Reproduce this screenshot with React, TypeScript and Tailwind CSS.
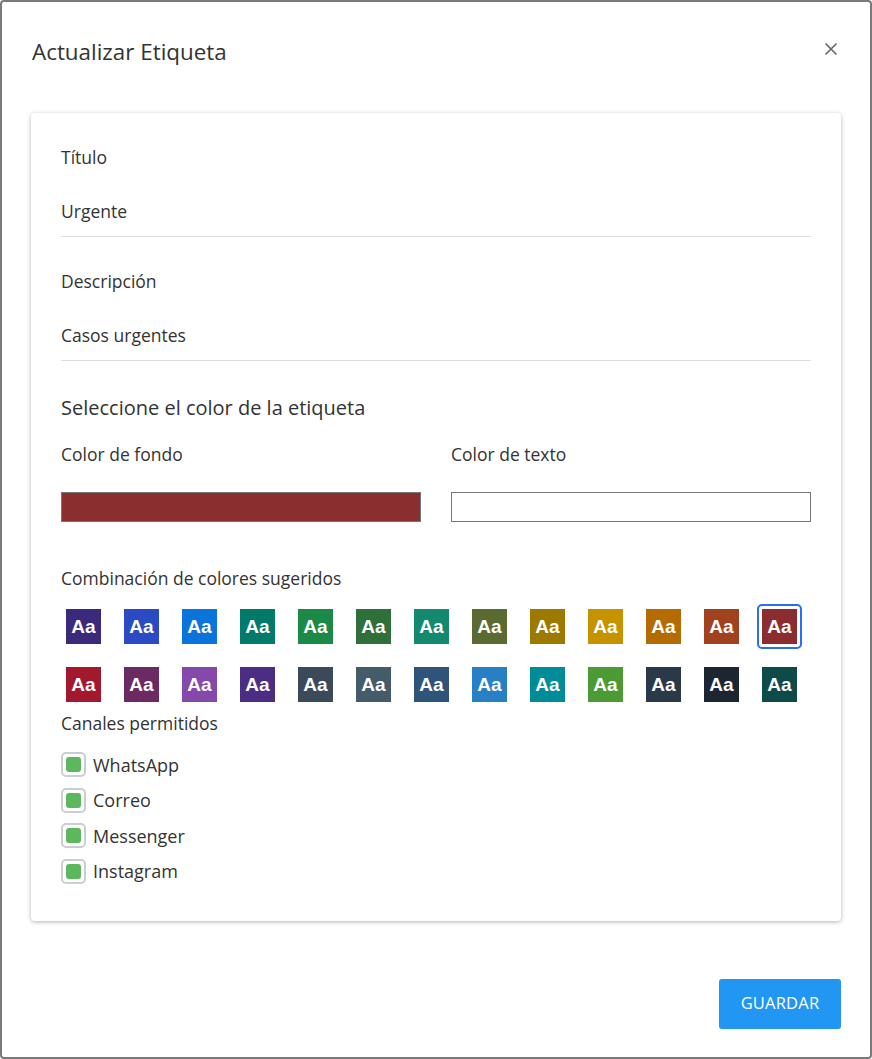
import { useState } from "react";

const SWATCHES = [
  "#3b2a7c", "#2b4bc4", "#0a74da", "#01796b", "#1b8a47", "#2f6f3a", "#138a70",
  "#5a6a30", "#9c7a00", "#c59200", "#b46c00", "#a0421e", "#8b2c2f",
  "#a2182d", "#6c2a63", "#8549ab", "#4b2e84", "#3a4a5b", "#445b6a", "#2f5479",
  "#2680c3", "#008b99", "#4c9a33", "#2a3948", "#1c2631", "#0e4b48",
];

const CHANNELS = ["WhatsApp", "Correo", "Messenger", "Instagram"];

const Field = ({ label, value }: { label: string; value: string }) => (
  <div className="border-b border-[#dcdcdc] pb-[13px]">
    <div className="leading-[24px] text-[17.5px] text-[#333]">{label}</div>
    <div className="mt-[30px] leading-[24px] text-[17.5px] text-[#333]">{value}</div>
  </div>
);

const App = () => {
  const [selected, setSelected] = useState(12);

  return (
    <div
      className="w-[872px] h-[1059px] bg-white border-2 border-[#7a7a7a] rounded-[4px] flex flex-col px-[29px] text-[#333]"
      style={{ fontFamily: '"Open Sans", "Noto Sans", sans-serif' }}
    >
      <div className="flex items-center justify-between pt-[35px]">
        <h1 className="text-[22.4px] leading-[30px] pl-[1px] text-[#333]">Actualizar Etiqueta</h1>
        <button type="button" className="mr-[3px] -mt-[6px] text-[#666]" aria-label="Cerrar">
          <svg width="14" height="14" viewBox="0 0 14 14">
            <path d="M1.5 1.5 L12.5 12.5 M12.5 1.5 L1.5 12.5" stroke="#666" strokeWidth="1.6" />
          </svg>
        </button>
      </div>

      <div className="mt-[46px] rounded-[4px] bg-white shadow-[0_1px_4px_rgba(0,0,0,0.3)] px-[30px] pt-[32px] pb-[37px]">
        <Field label="Título" value="Urgente" />
        <div className="mt-[32px]">
          <Field label="Descripción" value="Casos urgentes" />
        </div>

        <h2 className="mt-[33px] text-[20px] leading-[28px]">Seleccione el color de la etiqueta</h2>

        <div className="mt-[20px] grid grid-cols-2 gap-x-[30px]">
          <div>
            <div className="text-[17.5px] leading-[24px]">Color de fondo</div>
            <div className="mt-[26px] h-[30px] border border-[#777] bg-[#8b2e2f]" />
          </div>
          <div>
            <div className="text-[17.5px] leading-[24px]">Color de texto</div>
            <div className="mt-[26px] h-[30px] border border-[#777] bg-white" />
          </div>
        </div>

        <div className="mt-[44px] text-[17.5px] leading-[24px]">Combinación de colores sugeridos</div>
        <div className="mt-[14px] grid grid-cols-[repeat(13,45px)] gap-x-[13px] gap-y-[13px]">
          {SWATCHES.map((color, i) => (
            <button
              key={color + i}
              type="button"
              onClick={() => setSelected(i)}
              className={
                i === selected
                  ? "w-[45px] h-[45px] p-[3px] border-2 border-[#2a6ef5] rounded-[5px]"
                  : "w-[45px] h-[45px] p-[3px] border-2 border-transparent rounded-[5px]"
              }
            >
              <span
                className="flex w-[35px] h-[35px] items-center justify-center text-white font-bold text-[19px] leading-none"
                style={{ backgroundColor: color, fontFamily: '"Liberation Sans", Arial, sans-serif' }}
              >
                Aa
              </span>
            </button>
          ))}
        </div>

        <div className="mt-[4px] text-[17.5px] leading-[24px]">Canales permitidos</div>
        <div className="mt-[17px] flex flex-col gap-[10.5px]">
          {CHANNELS.map((name) => (
            <label key={name} className="flex items-center gap-[7px] h-[25px]">
              <span className="flex w-[25px] h-[25px] items-center justify-center rounded-[5px] border-2 border-[#c9ced3]">
                <span className="w-[15px] h-[15px] rounded-[3px] bg-[#5cb85c]" />
              </span>
              <span className="text-[18px] leading-[24px]">{name}</span>
            </label>
          ))}
        </div>
      </div>

      <div className="mt-[58px] flex justify-end">
        <button
          type="button"
          className="w-[122px] h-[50px] rounded-[3px] bg-[#2196f3] text-white text-[16.5px] tracking-[0.2px]"
        >
          GUARDAR
        </button>
      </div>
    </div>
  );
};

export default App;
